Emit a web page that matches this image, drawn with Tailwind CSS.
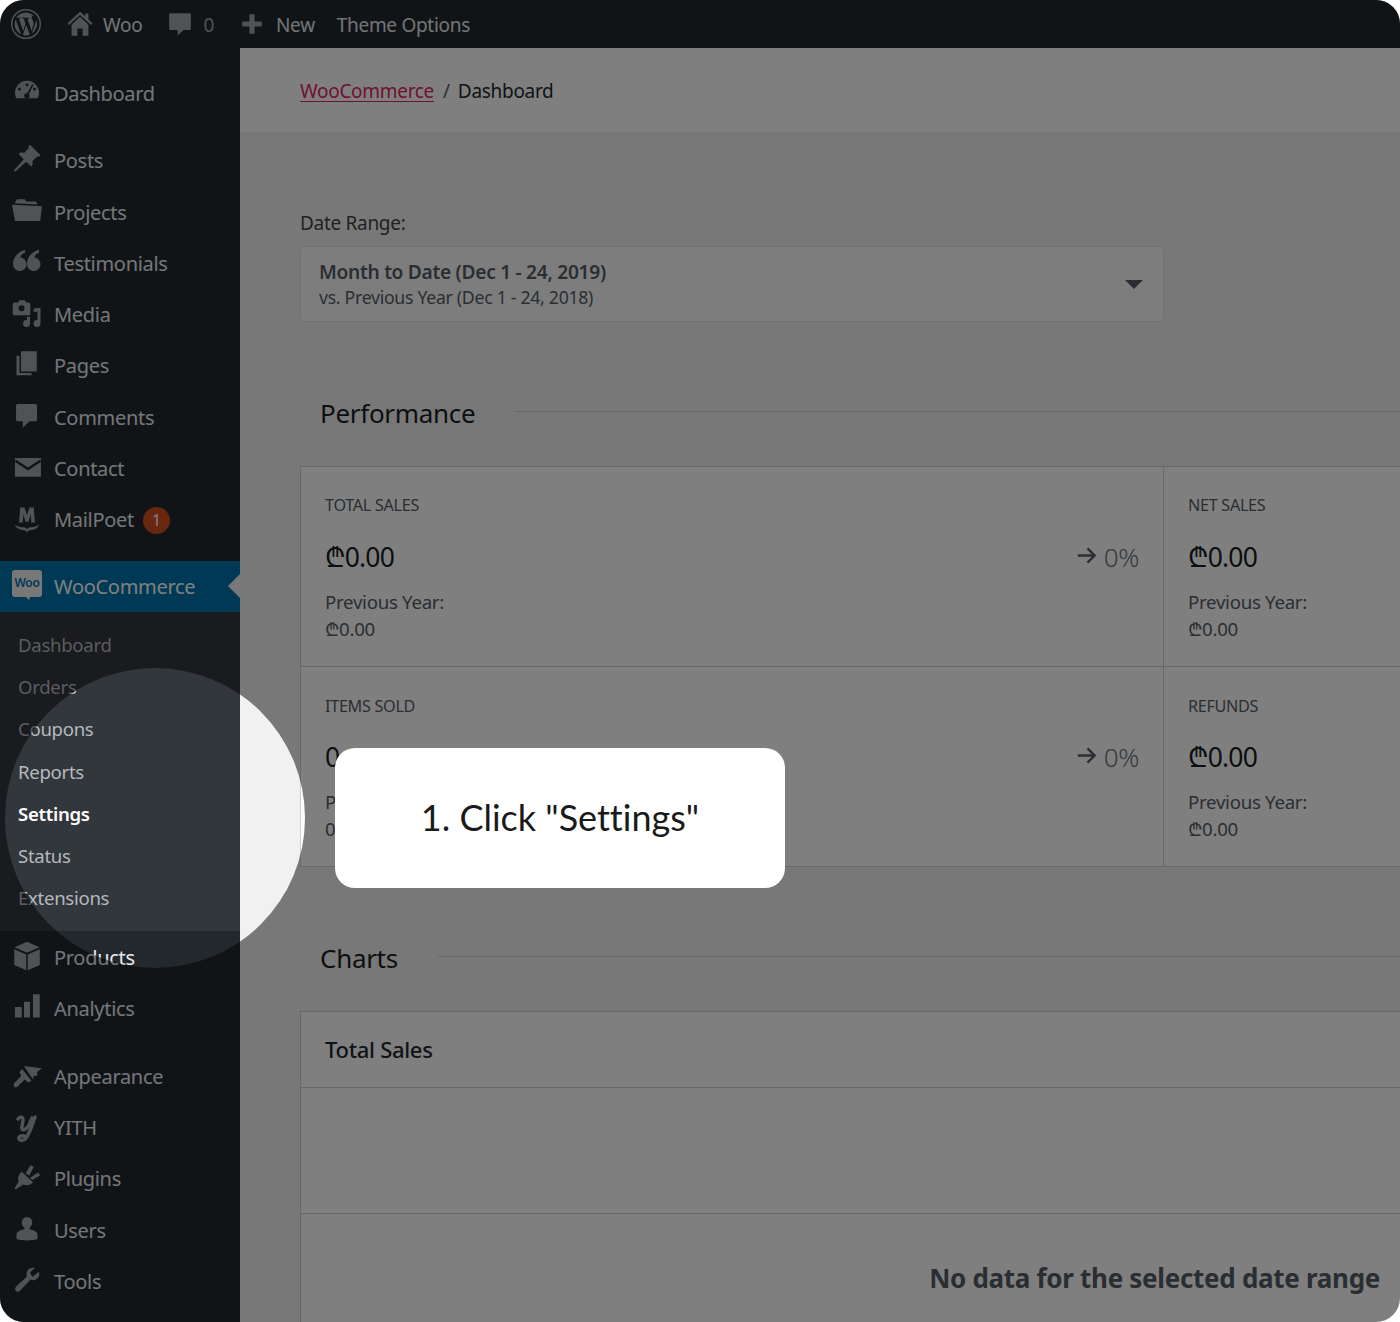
<!DOCTYPE html>
<html lang="en">
<head>
    <meta charset="UTF-8">
    <title>WooCommerce Dashboard</title>
    <script src="https://cdn.jsdelivr.net/npm/@tailwindcss/browser@4"></script>
</head>
<body class="bg-white">
<div class="relative w-[1400px] h-[1322px] overflow-hidden rounded-[24px] bg-[#f1f1f1] font-['Noto_Sans',sans-serif] tracking-[-0.3px]">

    <!-- top bar -->
    <header class="h-12 pt-[2px] bg-[#23282d] flex items-center text-[#e4e8ec] text-[19px]">
        <svg class="w-8 h-8 -mt-[2px] ml-[10px] mr-[25px] text-[#a0a5aa]" viewBox="0 0 20 20" fill="currentColor"><path d="M10 .6a9.4 9.4 0 1 0 0 18.8A9.4 9.4 0 0 0 10 .6zm0 .9a8.5 8.500 0 1 1 0 17 8.500 8.500 0 0 1 0-17zM2.900 10c0 2.800 1.600 5.200 4 6.400L3.500 7.100A7 7 0 0 0 2.900 10zm11.900-.4c0-.9-.3-1.500-.6-2-.3-.6-.7-1-.7-1.600 0-.6.500-1.200 1.200-1.200h.1A7.100 7.100 0 0 0 4 6.100h.5c.7 0 1.900-.1 1.900-.1.400 0 .4.500 0 .6l-.8.100 2.600 7.700 1.500-4.600-1.100-3.100-.7-.1c-.4 0-.3-.6 0-.6 0 0 1.200.1 1.900.1h1.900c.4 0 .4.500 0 .6l-.8.100 2.600 7.600.7-2.400c.3-.9.600-1.600.6-2.100zm-4.700 1-2.100 6.200a7 7 0 0 0 4.400-.1v-.1zm6.100-4c0 .2.100.5.100.7 0 .7-.1 1.500-.5 2.500l-2.200 6.200a7.100 7.100 0 0 0 2.600-8.900z"/></svg>
        <svg class="w-[26px] h-[26px] -mt-[3px] mr-[10px] text-[#a0a5aa]" viewBox="0 0 20 20" fill="currentColor"><path d="M10 .500 14 4V2h2.500v4.400L19.500 9.500l-1 1.200L10 3 1.500 10.700l-1-1.200z"/><path d="M10 4.500l6.500 6V19H12v-5.500H8V19H3.500v-8.500z"/></svg>
        <span class="mr-[26px]">Woo</span>
        <svg class="w-6 h-6 -mt-[2px] mr-[11px] text-[#a0a5aa]" viewBox="0 0 20 20" fill="currentColor"><path d="M2 1h16a1 1 0 0 1 1 1v12a1 1 0 0 1-1 1h-5l-5 4.500V15H2a1 1 0 0 1-1-1V2a1 1 0 0 1 1-1z"/></svg>
        <span class="mr-[25px] text-[#a0a5aa]">0</span>
        <svg class="w-[26px] h-[26px] -mt-[2px] mr-[11px] text-[#a0a5aa]" viewBox="0 0 20 20" fill="currentColor"><path d="M8 2.500h4V8h5.500v4H12v5.500H8V12H2.500V8H8z"/></svg>
        <span class="mr-[22px]">New</span>
        <span>Theme Options</span>
    </header>

    <div class="flex h-[1274px]">
        <!-- sidebar -->
        <aside class="w-60 shrink-0 bg-[#23282d] text-[#e8ecf0] text-[20px]">
            <div class="pt-5">
                <a class="flex items-center h-[51px]"><svg class="w-[30px] h-[30px] -mt-1 ml-3 mr-3 text-[#a0a5aa]" viewBox="0 0 20 20" fill="currentColor"><path d="M10 2.500a8 8 0 0 0-7.500 10.800l.4.800h14.200l.4-.8A8 8 0 0 0 10 2.500zm0 1.600a1 1 0 1 1 0 2 1 1 0 0 1 0-2zM5 7a1 1 0 1 1 0 2 1 1 0 0 1 0-2zm10 0a1 1 0 1 1 0 2 1 1 0 0 1 0-2zm-1.500-2.300.9.500-3.200 6.100a1.800 1.800 0 1 1-1-.5z"/></svg>Dashboard</a>
            </div>
            <nav class="pt-[16.700px]">
                <a class="flex items-center h-[51.250px]"><svg class="w-[30px] h-[30px] -mt-1 ml-3 mr-3 text-[#a0a5aa]" viewBox="0 0 20 20" fill="currentColor"><path d="M12 .500 19 7.500l-1 1-1-.3-3.500 3.300c.6 1.400.3 2.700-.6 3.500L9.500 11.800 2 18.500l-.8-.8 6.600-7.600L4.500 6.600c.9-.9 2.200-1.200 3.600-.6l3.200-3.500-.3-1z"/></svg>Posts</a>
                <a class="flex items-center h-[51.250px]"><svg class="w-[30px] h-[30px] -mt-1 ml-3 mr-3 text-[#a0a5aa]" viewBox="0 0 20 20" fill="currentColor"><path d="M0 5.800 20 6.800 18.800 16.700H2zM1.800 4.800 3.300 2.200H8.500L9.500 3.700H16L17 5.600z"/></svg>Projects</a>
                <a class="flex items-center h-[51.250px]"><svg class="w-[30px] h-[30px] -mt-1 ml-3 mr-3 text-[#a0a5aa]" viewBox="0 0 20 20" fill="currentColor"><path d="M8.800 1.800C4 3 .7 6.800 .7 11.500a4.500 4.500 0 1 0 5-4.500c.2-1.500 1.300-2.700 3.100-3.200zM18 1.800c-4.800 1.200-8 5-8 9.700a4.500 4.500 0 1 0 5-4.500c.2-1.500 1.300-2.700 3-3.200z"/></svg>Testimonials</a>
                <a class="flex items-center h-[51.250px]"><svg class="w-[30px] h-[30px] -mt-1 ml-3 mr-3 text-[#a0a5aa]" viewBox="0 0 20 20" fill="currentColor"><path fill-rule="evenodd" d="M5 1.500h3.500L9.500 3h1.700a1 1 0 0 1 1 1v6.500a1 1 0 0 1-1 1H1.500a1 1 0 0 1-1-1V4a1 1 0 0 1 1-1h2.500zM6.400 4.800a2 2 0 1 0 0 4 2 2 0 0 0 0-4z"/><path d="M19 6.500v10.500a2.300 2.300 0 1 1-2-2.300V9l-2.500.5V7zM12 12.500v4.500a2.300 2.300 0 1 1-2-2.300V12.500z"/></svg>Media</a>
                <a class="flex items-center h-[51.250px]"><svg class="w-[30px] h-[30px] -mt-1 ml-3 mr-3 text-[#a0a5aa]" viewBox="0 0 20 20" fill="currentColor"><path d="M6 1.500h10.500V15H6zM3 4.500h2V16h8v1.500H3z"/></svg>Pages</a>
                <a class="flex items-center h-[51.250px]"><svg class="w-[30px] h-[30px] -mt-1 ml-3 mr-3 text-[#a0a5aa]" viewBox="0 0 20 20" fill="currentColor"><path d="M3.700 2h12a1 1 0 0 1 1 1v9.500a1 1 0 0 1-1 1h-4l-4.500 4.300v-4.300H3.700a1 1 0 0 1-1-1V3a1 1 0 0 1 1-1z"/></svg>Comments</a>
                <a class="flex items-center h-[51.250px]"><svg class="w-[30px] h-[30px] -mt-1 ml-3 mr-3 text-[#a0a5aa]" viewBox="0 0 20 20"><path d="M2 4h17.300v12.500H2z" fill="currentColor"/><path d="M2.300 5.800 10.600 11.300 19 5.800" fill="none" stroke="#23282d" stroke-width="1.600"/></svg>Contact</a>
                <a class="flex items-center h-[51.250px]"><svg class="w-[30px] h-[30px] -mt-1 ml-3 mr-3 text-[#a0a5aa]" viewBox="0 0 20 20" fill="currentColor"><path d="M5.500 3h2.800L10 8l1.700-5h2.800l.8 10h-2.500l-.3-5.500L11 12.500H9L7.500 7.500 7.200 13H4.700zM2 14.500c2 1.500 5 1.800 6.500 1.800.6 0 1 .7 1.500 1.200.5-.5.900-1.200 1.500-1.200 1.500 0 4.500-.3 6.500-1.800-.5 2-3 3.500-5.500 3.500-1 0-2 .7-2.500 1.500-.5-.8-1.500-1.500-2.500-1.500-2.500 0-5-1.500-5.500-3.500z"/></svg>MailPoet<span class="ml-[9px] w-[27px] h-[27px] rounded-full bg-[#d54e21] text-white text-[16px] flex items-center justify-center">1</span></a>
            </nav>
            <a class="mt-[15.300px] pt-[2px] flex items-center h-[51px] bg-[#0073aa] text-white relative"><svg class="w-[30px] h-[30px] -mt-[4px] ml-3 mr-3" viewBox="0 0 30 30"><path d="M3 0h24a3 3 0 0 1 3 3v21a3 3 0 0 1-3 3h-9l-1 3-3-3H3a3 3 0 0 1-3-3V3a3 3 0 0 1 3-3z" fill="#f1f1f1"/><text x="15" y="17" font-size="12" font-family="Noto Sans" font-weight="600" text-anchor="middle" fill="#0073aa">Woo</text></svg>WooCommerce<span class="absolute right-0 top-[13px] border-y-[12px] border-y-transparent border-r-[12px] border-r-[#f1f1f1]"></span></a>
            <div class="bg-[#32373c] pt-[12px] h-[319px] text-[18.600px] text-[#b4b9be]">
                <a class="block pl-[18px] h-[42.200px] leading-[42px]">Dashboard</a>
                <a class="block pl-[18px] h-[42.200px] leading-[42px]">Orders</a>
                <a class="block pl-[18px] h-[42.200px] leading-[42px]">Coupons</a>
                <a class="block pl-[18px] h-[42.200px] leading-[42px]">Reports</a>
                <a class="block pl-[18px] h-[42.200px] leading-[42px] text-white font-semibold">Settings</a>
                <a class="block pl-[18px] h-[42.200px] leading-[42px]">Status</a>
                <a class="block pl-[18px] h-[42.200px] leading-[42px]">Extensions</a>
            </div>
            <nav class="pt-px">
                <a class="flex items-center h-[52px]"><svg class="w-[30px] h-[30px] -mt-1 ml-3 mr-3 text-[#a0a5aa]" viewBox="0 0 20 20" fill="currentColor"><path d="M10 .5l8.300 3.700-8.300 3.700-8.300-3.700zM1.500 5.500 9.500 9v10.500l-8-3.500zM18.500 5.500V16l-8 3.500V9z"/></svg>Products</a>
                <a class="flex items-center h-[51px]"><svg class="w-[30px] h-[30px] -mt-1 ml-3 mr-3 text-[#a0a5aa]" viewBox="0 0 20 20" fill="currentColor"><path d="M2 10h4.500v7H2zM8 6.500h4V17H8zM14 1.500h4.500V17H14z"/></svg>Analytics</a>
            </nav>
            <nav class="pt-4">
                <a class="flex items-center h-[51.300px]"><svg class="w-[30px] h-[30px] -mt-1 ml-3 mr-3 text-[#a0a5aa]" viewBox="0 0 20 20" fill="currentColor"><path d="M8 4 19.800 5.500 16.800 8 16.800 10.500 14.500 10.500 14 13z"/><path d="M6.800 6 13 13.800 10.800 15 8.500 13 3.800 17.700C2 19 .3 17.300 1.500 15.500L6.200 10.500 5 8z"/></svg>Appearance</a>
                <a class="flex items-center h-[51.300px]"><svg class="w-[30px] h-[30px] ml-3 mr-3 text-[#a0a5aa]" viewBox="0 0 30 30" fill="none" stroke="currentColor" stroke-width="3.500" stroke-linecap="round"><path d="M6 6C8 3 11 4 11 7 11 11 9 14 10 16 11 18 15 16 17 12L20 5"/><path d="M23 4C20 12 18 20 14 25 12 28 8 28 7 26 6 24 9 22 12 23"/></svg>YITH</a>
                <a class="flex items-center h-[51.300px]"><svg class="w-[30px] h-[30px] -mt-1 ml-3 mr-3 text-[#a0a5aa]" viewBox="0 0 20 20" fill="currentColor"><path d="M6.500 6.500 14 13.500C12.500 15.500 9.500 16 7.500 15L3 18H2V17L4.500 13C3.500 11 4.500 8 6.500 6.500zM9 7.500 12.500 2 14.500 3.300 11.500 9zM12 10.500 17.500 7 18.700 9 13.500 12z"/></svg>Plugins</a>
                <a class="flex items-center h-[51.300px]"><svg class="w-[30px] h-[30px] -mt-1 ml-3 mr-3 text-[#a0a5aa]" viewBox="0 0 20 20" fill="currentColor"><path d="M10 2a3.500 3.500 0 0 1 3.500 3.500c0 1.500-.8 3-1.800 3.700v1c2.500.5 5.300 1.500 5.300 3.500v3c-4 1.300-10 1.300-14 0v-3c0-2 2.800-3 5.300-3.500v-1c-1-.7-1.800-2.200-1.800-3.700A3.500 3.500 0 0 1 10 2z"/></svg>Users</a>
                <a class="flex items-center h-[51.300px]"><svg class="w-[30px] h-[30px] -mt-1 ml-3 mr-3 text-[#a0a5aa]" viewBox="0 0 20 20" fill="currentColor"><path d="M18 4.500c.6 2-.1 4-1.700 5-1.300.8-2.800.7-4 .2L5.500 17c-1 1-2.500 1-3 .2-.7-.8-.5-2 .3-2.800l7.200-6.700c-.5-1.300-.4-2.800.4-4 1-1.500 3-2.200 4.800-1.700L12 5l1.500 3z"/></svg>Tools</a>
            </nav>
        </aside>

        <!-- main -->
        <main class="flex-1 min-w-0 text-[#23282d]">
            <div class="h-[84px] bg-white flex items-center pl-[60px] text-[19px] pt-[2px]">
                <a class="text-[#e0245e] underline underline-offset-[3px] decoration-1">WooCommerce</a>
                <span class="ml-[9px] mr-[8px] text-[#555d66]">/</span>
                <span>Dashboard</span>
            </div>
            <div class="pl-[60px]">
                <p class="mt-[77px] text-[19px] text-[#444] leading-7">Date Range:</p>
                <div class="mt-[9px] w-[863.500px] h-[76px] bg-white/70 border border-[#e2e4e7] rounded-[4px] pl-[18px] pr-[20px] flex items-center justify-between">
                    <div>
                        <p class="text-[19.200px] font-semibold text-[#555d66] leading-[26px]">Month to Date (Dec 1 - 24, 2019)</p>
                        <p class="text-[17.700px] text-[#555d66] leading-6">vs. Previous Year (Dec 1 - 24, 2018)</p>
                    </div>
                    <span class="border-x-[9px] border-x-transparent border-t-[9px] border-t-[#555d66]"></span>
                </div>

                <div class="mt-[73px] flex items-center pl-5 h-10">
                    <h2 class="-mt-1 text-[26px] font-normal text-[#191e23]">Performance</h2>
                    <div class="ml-10 flex-1 h-px bg-[#ccd0d4] -mt-2"></div>
                </div>

                <div class="mt-[31px] grid grid-cols-[863px_1fr] bg-white border-y border-l border-[#ccd0d4]">
                    <div class="h-[200px] border-r border-b border-[#ccd0d4] px-6 pt-[26px]">
                        <p class="text-[16.200px] text-[#555d66] leading-6">TOTAL SALES</p>
                        <div class="mt-[22px] h-9 flex items-center justify-between">
                            <span class="text-[26.500px] tracking-[-0.8px] text-[#191e23] leading-9">₾0.00</span>
                            <span class="flex items-center gap-[6px] text-[26px] font-light text-[#6c7781]"><svg class="w-[23px] h-[23px] -mt-1 text-[#555d66]" viewBox="0 0 24 24" fill="none" stroke="currentColor" stroke-width="2.500"><path d="M3 12h17M13 4.500l7.500 7.500-7.500 7.500"/></svg>0%</span>
                        </div>
                        <p class="mt-[13px] text-[18.700px] text-[#555d66] leading-[27px]">Previous Year:</p>
                        <p class="text-[18.700px] text-[#555d66] leading-[27px]">₾0.00</p>
                    </div>
                    <div class="h-[200px] border-b border-[#ccd0d4] pl-6 pt-[26px]">
                        <p class="text-[16.200px] text-[#555d66] leading-6">NET SALES</p>
                        <p class="mt-[22px] text-[26.500px] tracking-[-0.8px] text-[#191e23] leading-9">₾0.00</p>
                        <p class="mt-[13px] text-[18.700px] text-[#555d66] leading-[27px]">Previous Year:</p>
                        <p class="text-[18.700px] text-[#555d66] leading-[27px]">₾0.00</p>
                    </div>
                    <div class="h-[199px] border-r border-[#ccd0d4] px-6 pt-[27px]">
                        <p class="text-[16.200px] text-[#555d66] leading-6">ITEMS SOLD</p>
                        <div class="mt-[21px] h-9 flex items-center justify-between">
                            <span class="text-[26.500px] tracking-[-0.8px] text-[#191e23] leading-9">0</span>
                            <span class="flex items-center gap-[6px] text-[26px] font-light text-[#6c7781]"><svg class="w-[23px] h-[23px] -mt-1 text-[#555d66]" viewBox="0 0 24 24" fill="none" stroke="currentColor" stroke-width="2.500"><path d="M3 12h17M13 4.500l7.500 7.500-7.500 7.500"/></svg>0%</span>
                        </div>
                        <p class="mt-[13px] text-[18.700px] text-[#555d66] leading-[27px]">Previous Year:</p>
                        <p class="text-[18.700px] text-[#555d66] leading-[27px]">0</p>
                    </div>
                    <div class="h-[199px] pl-6 pt-[27px]">
                        <p class="text-[16.200px] text-[#555d66] leading-6">REFUNDS</p>
                        <p class="mt-[21px] text-[26.500px] tracking-[-0.8px] text-[#191e23] leading-9">₾0.00</p>
                        <p class="mt-[13px] text-[18.700px] text-[#555d66] leading-[27px]">Previous Year:</p>
                        <p class="text-[18.700px] text-[#555d66] leading-[27px]">₾0.00</p>
                    </div>
                </div>

                <div class="mt-[73px] flex items-center pl-5 h-10">
                    <h2 class="-mt-1 text-[26px] font-normal text-[#191e23]">Charts</h2>
                    <div class="ml-10 flex-1 h-px bg-[#ccd0d4] -mt-2"></div>
                </div>

                <div class="mt-[31px] bg-white border-l border-t border-[#ccd0d4] h-[400px]">
                    <div class="h-[76px] border-b border-[#ccd0d4] pl-6 flex items-center text-[22px] font-medium text-[#23282d]">Total Sales</div>
                    <div class="h-[126px] border-b border-[#ccd0d4]"></div>
                    <p class="pt-[46px] pr-5 text-right text-[26px] font-bold text-[#555d66] leading-9">No data for the selected date range</p>
                </div>
            </div>
        </main>
    </div>

    <!-- spotlight: the dim layer is the ring's shadow -->
    <div class="absolute left-[5px] top-[668px] w-[300px] h-[300px] rounded-full shadow-[0_0_0_2000px_rgba(0,0,0,0.5)]"></div>

    <!-- callout -->
    <div class="absolute left-[335px] top-[748px] w-[450px] h-[140px] pb-[2px] rounded-[20px] bg-white flex items-center justify-center text-[36px] text-[#1a1a1a] font-['Lato',sans-serif] tracking-normal [font-variant-ligatures:none]">1. Click "Settings"</div>
</div>
</body>
</html>
